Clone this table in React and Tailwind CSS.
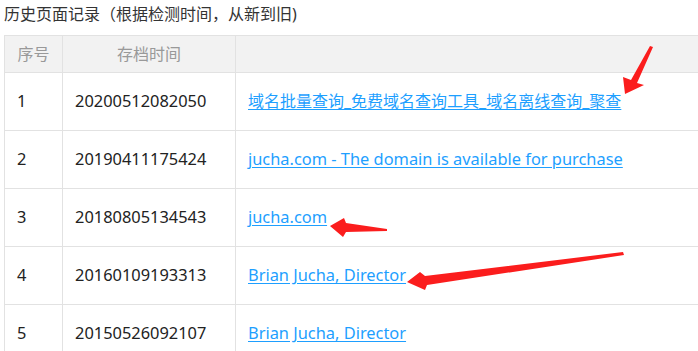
const rows = [
  { id: 1, time: "20200512082050", title: "域名批量查询_免费域名查询工具_域名离线查询_聚查", cjk: true },
  { id: 2, time: "20190411175424", title: "jucha.com - The domain is available for purchase" },
  { id: 3, time: "20180805134543", title: "jucha.com" },
  { id: 4, time: "20160109193313", title: "Brian Jucha, Director" },
  { id: 5, time: "20150526092107", title: "Brian Jucha, Director" },
];

// red annotation arrows drawn over the table
const arrows = [
  "625,94 623,77 631,80 650,46 653,47 637,83 644,85",
  "330,226 344,218 346,223 387,229 387,231 346,232 343,237",
  "407,282 420,272 425,276 623,252 624,255 427,285 425,290",
];

export default function App() {
  return (
    <div
      className="relative w-[698px] h-[351px] overflow-hidden bg-white pl-[4px]"
      style={{ fontFamily: '"Noto Sans", "Noto Sans CJK SC", sans-serif' }}
    >
      <div className="h-[35px] pt-[2px] text-[16px] leading-[24px] text-[#333]">
        历史页面记录（根据检测时间，从新到旧)
      </div>

      <table className="w-[760px] border-collapse text-[16.4px] table-fixed">
        <colgroup>
          <col className="w-[58px]" />
          <col className="w-[173px]" />
          <col />
        </colgroup>
        <thead>
          <tr className="h-[37px] bg-[#f2f2f2] text-[16px]">
            <th className="border border-[#e2e2e2] font-normal text-[#999] text-center">序号</th>
            <th className="border border-[#e2e2e2] font-normal text-[#999] text-center">存档时间</th>
            <th className="border border-[#e2e2e2]"></th>
          </tr>
        </thead>
        <tbody>
          {rows.map((r) => (
            <tr key={r.id} className="h-[58px]">
              <td className="border border-[#e2e2e2] pl-[12px] text-[#222]">{r.id}</td>
              <td className="border border-[#e2e2e2] pl-[12px] text-[#222]">{r.time}</td>
              <td className="border border-[#e2e2e2] pl-[12px]">
                <a
                  href="#"
                  className={
                    r.cjk
                      ? "text-[16px] text-[#1e9fff] underline underline-offset-2"
                      : "text-[#1e9fff] underline underline-offset-2"
                  }
                >
                  {r.title}
                </a>
              </td>
            </tr>
          ))}
        </tbody>
      </table>

      <svg className="absolute inset-0 pointer-events-none" width="698" height="351">
        {arrows.map((pts, i) => (
          <polygon key={i} points={pts} fill="#fb1d1d" />
        ))}
      </svg>
    </div>
  );
}
